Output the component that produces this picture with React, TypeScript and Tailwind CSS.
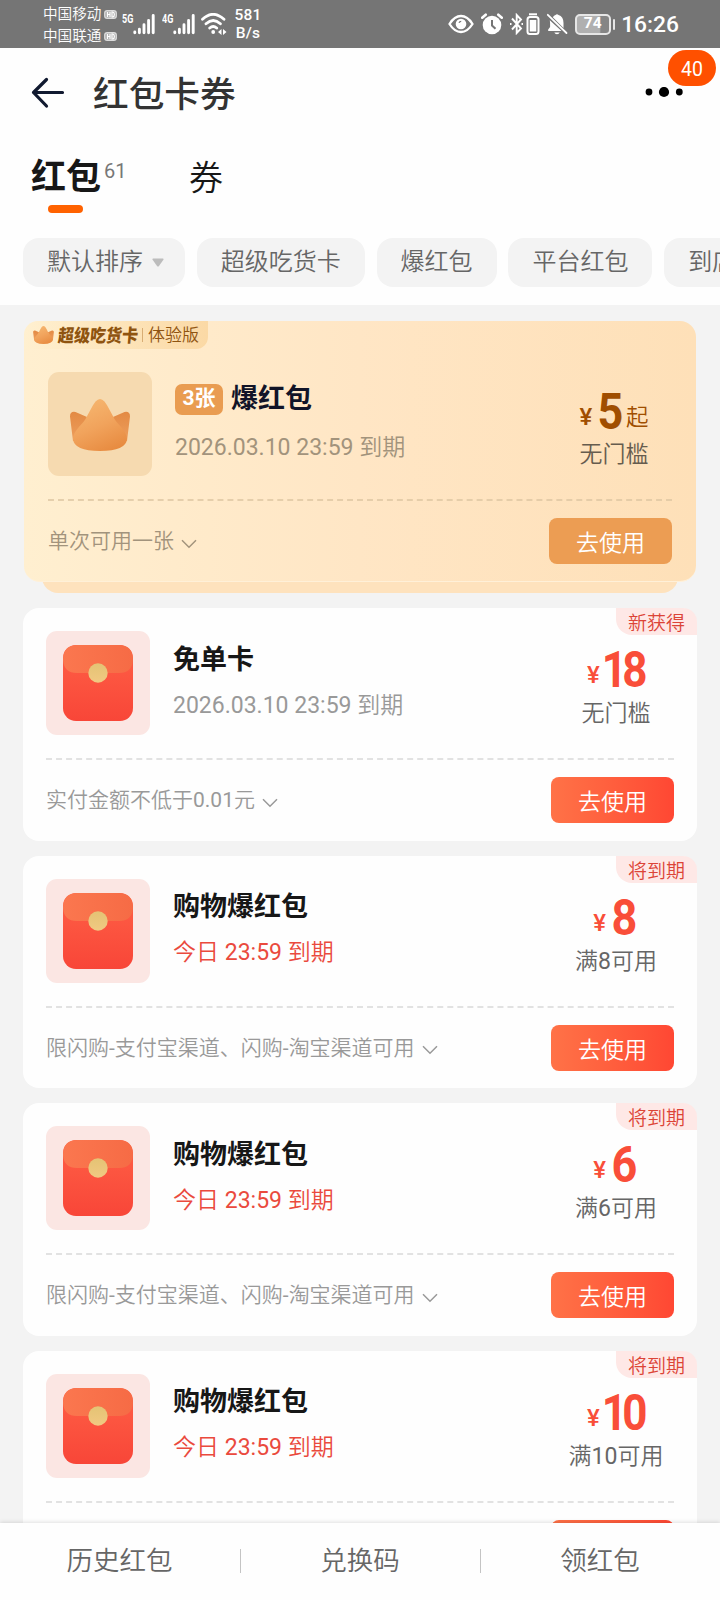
import React from "react";

type Coupon = {
  title: string;
  date: string;
  urgent: boolean;
  rule: string;
  amount: string;
  limit: string;
  tag: string;
};

const coupons: Coupon[] = [
  { title: "免单卡", date: "2026.03.10 23:59 到期", urgent: false, rule: "实付金额不低于0.01元", amount: "18", limit: "无门槛", tag: "新获得" },
  { title: "购物爆红包", date: "今日 23:59 到期", urgent: true, rule: "限闪购-支付宝渠道、闪购-淘宝渠道可用", amount: "8", limit: "满8可用", tag: "将到期" },
  { title: "购物爆红包", date: "今日 23:59 到期", urgent: true, rule: "限闪购-支付宝渠道、闪购-淘宝渠道可用", amount: "6", limit: "满6可用", tag: "将到期" },
  { title: "购物爆红包", date: "今日 23:59 到期", urgent: true, rule: "限闪购-支付宝渠道、闪购-淘宝渠道可用", amount: "10", limit: "满10可用", tag: "将到期" },
];

/* Latin runs keep the regular weight while the Chinese text stays demi-light. */
function Mixed({ text }: { text: string }) {
  return (
    <span className="whitespace-pre">
      {text.split(/([\x20-\x7e]+)/).map((part, i) =>
        i % 2 ? <span key={i} className="font-normal">{part}</span> : part
      )}
    </span>
  );
}

function Signal() {
  return (
    <svg width="22" height="22" viewBox="0 0 22 22" stroke="#fff" strokeWidth="2.900" strokeLinecap="round">
      <path d="M1.800 19.800v-.8M6.400 19.800v-3.500M11 19.800v-8M15.600 19.800V7.500M20.200 19.800V2.500" />
    </svg>
  );
}

function HdMark() {
  return (
    <svg width="13" height="9" viewBox="0 0 13 9" fill="none" stroke="#fff" strokeWidth="1.100">
      <rect x=".6" y=".6" width="11.800" height="7.800" rx="2.500" fill="#ffffff77" stroke="#ffffffaa" />
      <path d="M3.500 2v5M6 2v5M3.500 4.500H6M8 2v5h.8q1.600-.4 1.600-2.500T8.800 2z" />
    </svg>
  );
}

function StatusBar() {
  return (
    <div className="flex h-12 shrink-0 items-start bg-[#757575] pl-[43px] text-white">
      <div className="w-[79px] pt-[3px] text-[14.6px] leading-[22px]">
        <div className="flex items-center gap-[3px] whitespace-nowrap">中国移动<HdMark /></div>
        <div className="flex items-center gap-[3px] whitespace-nowrap">中国联通<HdMark /></div>
      </div>
      <div className="flex w-[40px] pt-[13px]">
        <span className="w-[11px] origin-left scale-x-[0.720] text-[12.500px] font-bold leading-[11px]">5G</span>
        <Signal />
      </div>
      <div className="flex w-[39px] pt-[13px]">
        <span className="w-[11px] origin-left scale-x-[0.720] text-[12.500px] font-bold leading-[11px]">4G</span>
        <Signal />
      </div>
      <svg className="mt-[13px]" width="26" height="22" viewBox="0 0 26 22" fill="none" stroke="#fff" strokeWidth="2.800" strokeLinecap="round">
        <path d="M1.500 6.300Q12-3.600 23 6.300M5 10.800q7.200-6.500 14.400 0M8.700 15q3.500-3 7 0" />
        <circle cx="12.200" cy="19" r="1.900" fill="#fff" stroke="none" />
        <path d="M20.500 16v6l-3.500-3zM22 16v6l3.500-3z" fill="#fff" stroke="none" />
      </svg>
      <div className="ml-[6px] w-[30px] pt-[6px] text-center text-[15.500px] font-medium leading-[18px] tracking-[0.200px]">581<br />B/s</div>
      <div className="ml-auto mr-[41px] flex h-12 items-center">
        <svg width="26" height="20" viewBox="0 0 26 20" fill="none" stroke="#fff" strokeWidth="2.300">
          <path d="M1.500 10Q6.500 2 13 2t11.500 8Q19.500 18 13 18T1.500 10z" />
          <circle cx="13" cy="10" r="5.300" fill="#fff" stroke="none" />
          <path d="M11 8.800q.6-1.500 2.200-1.500" stroke="#757575" strokeWidth="1.300" />
        </svg>
        <svg className="ml-[7px]" width="22" height="22" viewBox="0 0 22 22" fill="none">
          <circle cx="11" cy="12" r="9.300" fill="#fff" />
          <path d="M1.200 4.700L4.700 1.700M20.800 4.700L17.300 1.700" stroke="#fff" strokeWidth="2.600" strokeLinecap="round" />
          <path d="M11 7v5.500l3.500 3.300" stroke="#757575" strokeWidth="2" />
        </svg>
        <svg className="ml-[7px]" width="30" height="22" viewBox="0 0 30 22" fill="none" stroke="#fff" strokeWidth="1.900">
          <path d="M2 5.500l9 10-4.300 4.500V2l4.300 4.500-9 10" />
          <path d="M0 11h2M11.500 11h2" strokeDasharray="1.500 1" />
          <rect x="17.500" y="4" width="11" height="17" rx="2.500" strokeWidth="2" />
          <path d="M19 1.300h8" strokeWidth="2" />
          <rect x="19.700" y="7" width="6.600" height="11.500" fill="#fff" stroke="none" />
        </svg>
        <svg className="ml-[6px]" width="22" height="22" viewBox="0 0 22 22" fill="#fff">
          <path d="M6.800 4.200Q8 2.500 9.500 2q1.500-1.700 3 0 5 1.600 5 8v5zM3.800 7.200L15.500 18H2.200v-1.600l1.900-2.400V10z" />
          <path d="M8.300 19.500h5.400q-.7 1.800-2.700 1.800t-2.700-1.800z" />
          <path d="M1.800 1.800L20.500 20" stroke="#fff" strokeWidth="1.800" strokeLinecap="round" />
        </svg>
        <div className="ml-[7px] flex h-[21px] w-[36px] items-center justify-center rounded-[5px] border-2 border-[#e6e6e6] bg-linear-to-r from-[#b0b0b0] from-70% to-[#858585] to-75% pr-px text-[15.500px] font-bold leading-none">74</div>
        <div className="ml-[2px] h-[11px] w-[2px] rounded bg-[#e6e6e6]" />
        <div className="ml-[6px] mt-[2px] text-[22.800px] font-medium leading-[48px]">16:26</div>
      </div>
    </div>
  );
}

function Crown({ className, id }: { className: string; id: string }) {
  return (
    <svg className={className} viewBox="0 0 60 52" fill="none">
      <defs>
        <linearGradient id={id + "a"} x1=".3" y1="0" x2=".75" y2="1">
          <stop offset="0" stopColor="#f6b66f" />
          <stop offset=".5" stopColor="#f1a35c" />
          <stop offset="1" stopColor="#e78a3f" />
        </linearGradient>
        <linearGradient id={id + "b"} x1="0" y1="0" x2="0" y2="1">
          <stop offset="0" stopColor="#e38a44" />
          <stop offset="1" stopColor="#ee9e5c" />
        </linearGradient>
      </defs>
      <path d="M0 17.500Q0 12 5.500 13L17 18 11 42l-8 0zM60 17.500Q60 12 54.500 13L43 18l6 24 8 0z" fill={`url(#${id}b)`} />
      <path d="M25.500 2.500q4.500-5 9 0C38 7 41 14 44.500 20S57 32 57 40Q56 52 30 52T3 40C3 32 12 26 15.500 20S22 7 25.500 2.500z" fill={`url(#${id}a)`} />
    </svg>
  );
}

function Envelope() {
  return (
    <div className="flex size-[104px] shrink-0 items-start justify-center rounded-[11px] bg-[#fbe6e3] pt-[14px]">
      <svg width="70" height="76" viewBox="0 0 70 76">
        <defs>
          <linearGradient id="env" x1="0" y1="0" x2="0" y2="1">
            <stop offset="0" stopColor="#ff6046" />
            <stop offset="1" stopColor="#f84638" />
          </linearGradient>
          <linearGradient id="flap" x1="0" y1="0" x2="1" y2="0">
            <stop offset="0" stopColor="#fb774f" />
            <stop offset="1" stopColor="#f66b45" />
          </linearGradient>
          <linearGradient id="seal" x1="0" y1="0" x2="0" y2="1">
            <stop offset="0" stopColor="#e4c374" />
            <stop offset="1" stopColor="#f1c982" />
          </linearGradient>
        </defs>
        <rect width="70" height="76" rx="13" fill="url(#env)" />
        <path d="M0 15Q0 0 15 0h40q15 0 15 15-1 13-14 13H14Q1 28 0 15z" fill="url(#flap)" />
        <circle cx="35" cy="28" r="9.700" fill="url(#seal)" />
      </svg>
    </div>
  );
}

function Chevron() {
  return (
    <svg className="mt-[3px]" width="16" height="10" viewBox="0 0 16 10" fill="none" stroke="currentColor" strokeWidth="1.500">
      <path d="M1 1.200l7 7 7-7" />
    </svg>
  );
}

function Dashes({ color }: { color: string }) {
  return (
    <svg className="block w-full" height="2">
      <line x1="0" y1="1" x2="100%" y2="1" pathLength="626" stroke={color} strokeWidth="1.600" strokeDasharray="6 4" />
    </svg>
  );
}

function CouponCard({ c }: { c: Coupon }) {
  const wide = c.amount.length > 1;
  return (
    <div className="relative h-[232.500px] shrink-0 rounded-[16px] bg-[#fefefe] px-[23px] pt-[23px]">
      <div className="absolute right-0 top-0 h-[27px] w-[81px] rounded-bl-[16px] rounded-tr-[14px] bg-[#fee8e6] text-center text-[19px] leading-[31px] text-[#dc4437]">{c.tag}</div>
      <div className="flex h-[104px]">
        <Envelope />
        <div className="ml-[23px] flex-1">
          <div className="mt-[8.500px] text-[27px] font-bold leading-[40px] text-[#171717]">{c.title}</div>
          <div className={c.urgent ? "mt-[9px] text-[23px] leading-[34px] text-[#ea4a3d]" : "mt-[9px] text-[23px] leading-[34px] text-[#999]"}><Mixed text={c.date} /></div>
        </div>
        <div className="-mr-[5px] w-[126px] pt-[14px] text-center">
          <div className="flex h-[48px] items-baseline justify-center text-[#f94e39]">
            <span className="-translate-y-[4px] text-[24px] font-medium leading-[48px]">¥</span>
            <span className={wide ? "-ml-px scale-x-[0.880] text-[50px] font-bold leading-[50px] tracking-[-5.500px]" : "ml-[4px] scale-x-[0.900] text-[50px] font-bold leading-[50px]"}>{c.amount}</span>
          </div>
          <div className="mt-[4px] text-[23px] leading-[34px] text-[#666]"><Mixed text={c.limit} /></div>
        </div>
      </div>
      <div className="pt-[23px]"><Dashes color="#d9d9d9" /></div>
      <div className="mt-[17px] flex h-[46px] items-center justify-between">
        <div className="flex items-center gap-[7px] pt-[2px] text-[21px] text-[#999]"><Mixed text={c.rule} /><Chevron /></div>
        <div className="h-[46px] w-[123px] rounded-[8px] bg-linear-to-r from-[#ff7247] to-[#ff4733] text-center text-[23px] leading-[51px] text-white">去使用</div>
      </div>
    </div>
  );
}

function GoldCard() {
  return (
    <div className="mx-px mb-[15px] h-[272px] shrink-0">
      <div className="relative z-10 h-[261px] rounded-[16px] border-b border-[#fff0d8] bg-linear-to-r from-[#ffefd0] via-[#ffe6c5] to-[#fee0b8] px-[24px] pt-[51px]">
        <div className="absolute left-0 top-0 flex h-[28px] w-[184px] items-center rounded-br-[12px] rounded-tl-[14px] bg-linear-to-r from-[#fff0d0] to-[#fbd9a5] pl-[9px] text-[#8f5410]">
          <Crown className="h-[18px] w-[21px]" id="small" />
          <span className="ml-[4px] w-[82px] origin-left -skew-x-6 scale-x-[0.890] whitespace-nowrap text-[18px] font-black leading-[31px]">超级吃货卡</span>
          <span className="ml-[2px] h-[14px] w-px bg-[#d8ad74]" />
          <span className="ml-[5px] text-[17px] leading-[31px]">体验版</span>
        </div>
        <div className="flex h-[104px]">
          <div className="flex size-[104px] shrink-0 items-center justify-center rounded-[11px] bg-[#f6dab0]">
            <Crown className="mt-px h-[52px] w-[60px]" id="big" />
          </div>
          <div className="ml-[23px] flex-1">
            <div className="mt-[7px] flex h-[40px] items-center">
              <span className="h-[31px] w-[48px] rounded-[7px] bg-[#e99c51] text-center text-[21px] font-bold leading-[28px] text-white">3张</span>
              <span className="ml-[8px] text-[27px] font-bold leading-[40px] text-[#111428]">爆红包</span>
            </div>
            <div className="mt-[12px] text-[23px] leading-[34px] text-[#a2937c]"><Mixed text="2026.03.10 23:59 到期" /></div>
          </div>
          <div className="-mr-[6px] w-[128px] pt-[15px] text-center">
            <div className="flex h-[48px] items-baseline justify-center text-[#a04e00]">
              <span className="-translate-y-[4px] text-[24px] font-medium leading-[48px]">¥</span>
              <span className="ml-[4px] scale-x-[0.900] text-[50px] font-bold leading-[50px]">5</span>
              <span className="ml-px -translate-y-[4px] text-[22.500px] leading-[48px]">起</span>
            </div>
            <div className="mt-[3px] text-[23px] leading-[34px] text-[#665c4e]">无门槛</div>
          </div>
        </div>
        <div className="pt-[23px]"><Dashes color="#ddc5a1" /></div>
        <div className="mt-[17px] flex h-[46px] items-center justify-between">
          <div className="flex items-center gap-[7px] pt-[2px] text-[21px] text-[#a2937c]">单次可用一张<Chevron /></div>
          <div className="h-[46px] w-[123px] rounded-[8px] bg-[#ec9d53] text-center text-[23px] leading-[51px] text-white">去使用</div>
        </div>
      </div>
      <div className="mx-[18px] -mt-[8px] h-[19px] rounded-b-[16px] bg-[#fee2bd]" />
    </div>
  );
}

export default function App() {
  return (
    <div className="flex h-[1600px] w-[720px] flex-col overflow-hidden bg-[#f3f3f3] font-[Roboto,'Noto_Sans_CJK_SC',sans-serif]">
      <div className="flex min-h-0 flex-1 flex-col font-[350]">
        <StatusBar />
        <header className="h-[257px] shrink-0 bg-[#fefefe]">
          <div className="relative flex h-[90px] items-center pl-[31px]">
            <svg width="34" height="32" viewBox="0 0 34 32" fill="none" stroke="#111a30" strokeWidth="3.200" strokeLinecap="round" strokeLinejoin="round">
              <path d="M15.500 2.500L2.500 15.500 15.500 29M2.500 15.500H31.500" />
            </svg>
            <h1 className="ml-[28px] mt-[3px] text-[35.700px] font-medium leading-[50px] text-[#333]">红包卡券</h1>
            <svg className="ml-auto mr-[36px]" width="40" height="12" viewBox="0 0 40 12">
              <circle cx="5" cy="5" r="3.400" /><circle cx="20" cy="5" r="5.100" /><circle cx="35.300" cy="5" r="3.400" />
            </svg>
            <div className="absolute right-[4px] top-[2px] h-9 w-12 rounded-full bg-[#ff5000] text-center text-[19.500px] font-normal leading-[39px] text-white">40</div>
          </div>
          <nav className="flex h-[67px] pl-[31px] text-[#171717]">
            <div className="w-[158px]">
              <div className="flex h-[50px] pt-[15px]">
                <span className="text-[35px] font-bold leading-[50px]">红包</span>
                <span className="ml-[3px] mt-[6px] text-[20px] font-normal leading-[24px] text-[#777]">61</span>
              </div>
              <div className="ml-[17px] mt-[17px] h-[8px] w-[35px] rounded-full bg-[#ff6200]" />
            </div>
            <span className="pt-[15px] text-[34px] leading-[50px]">券</span>
          </nav>
          <div className="ml-[23px] mt-[33px] flex gap-[11.800px] overflow-hidden text-[24px] leading-[49px] text-[#666]">
            <div className="flex h-[49px] w-[162px] shrink-0 items-center gap-[9px] rounded-[16px] bg-[#f3f3f3] pl-[24px]">默认排序
              <svg width="12" height="9" viewBox="0 0 12 9"><path d="M1 .5h10q1 .3.400 1.200L7 8q-1 1-2 0L.6 1.700Q0 .8 1 .5z" fill="#bcbcbc" /></svg>
            </div>
            {["超级吃货卡", "爆红包", "平台红包", "到店红包"].map((t) => (
              <div key={t} className="h-[49px] shrink-0 whitespace-nowrap rounded-[16px] bg-[#f3f3f3] px-[24px]">{t}</div>
            ))}
          </div>
        </header>
        <main className="flex min-h-0 flex-1 flex-col overflow-hidden px-[23px] pt-[16px]">
          <GoldCard />
          <div className="flex flex-col gap-[15px]">
            {coupons.map((c, i) => <CouponCard key={i} c={c} />)}
          </div>
        </main>
      </div>
      <footer className="z-20 grid h-[77.500px] shrink-0 grid-cols-3 items-center bg-[#fefefe] text-center text-[26.500px] font-[350] leading-[40px] text-[#666] shadow-[0_-1px_4px_rgba(0,0,0,0.12)]">
        {["历史红包", "兑换码", "领红包"].map((t, i) => (
          <div key={t} className="flex items-center">
            {i > 0 && <span className="h-[24px] w-px bg-[#c4c4c4]" />}
            <span className="-ml-px flex-1">{t}</span>
          </div>
        ))}
      </footer>
    </div>
  );
}
